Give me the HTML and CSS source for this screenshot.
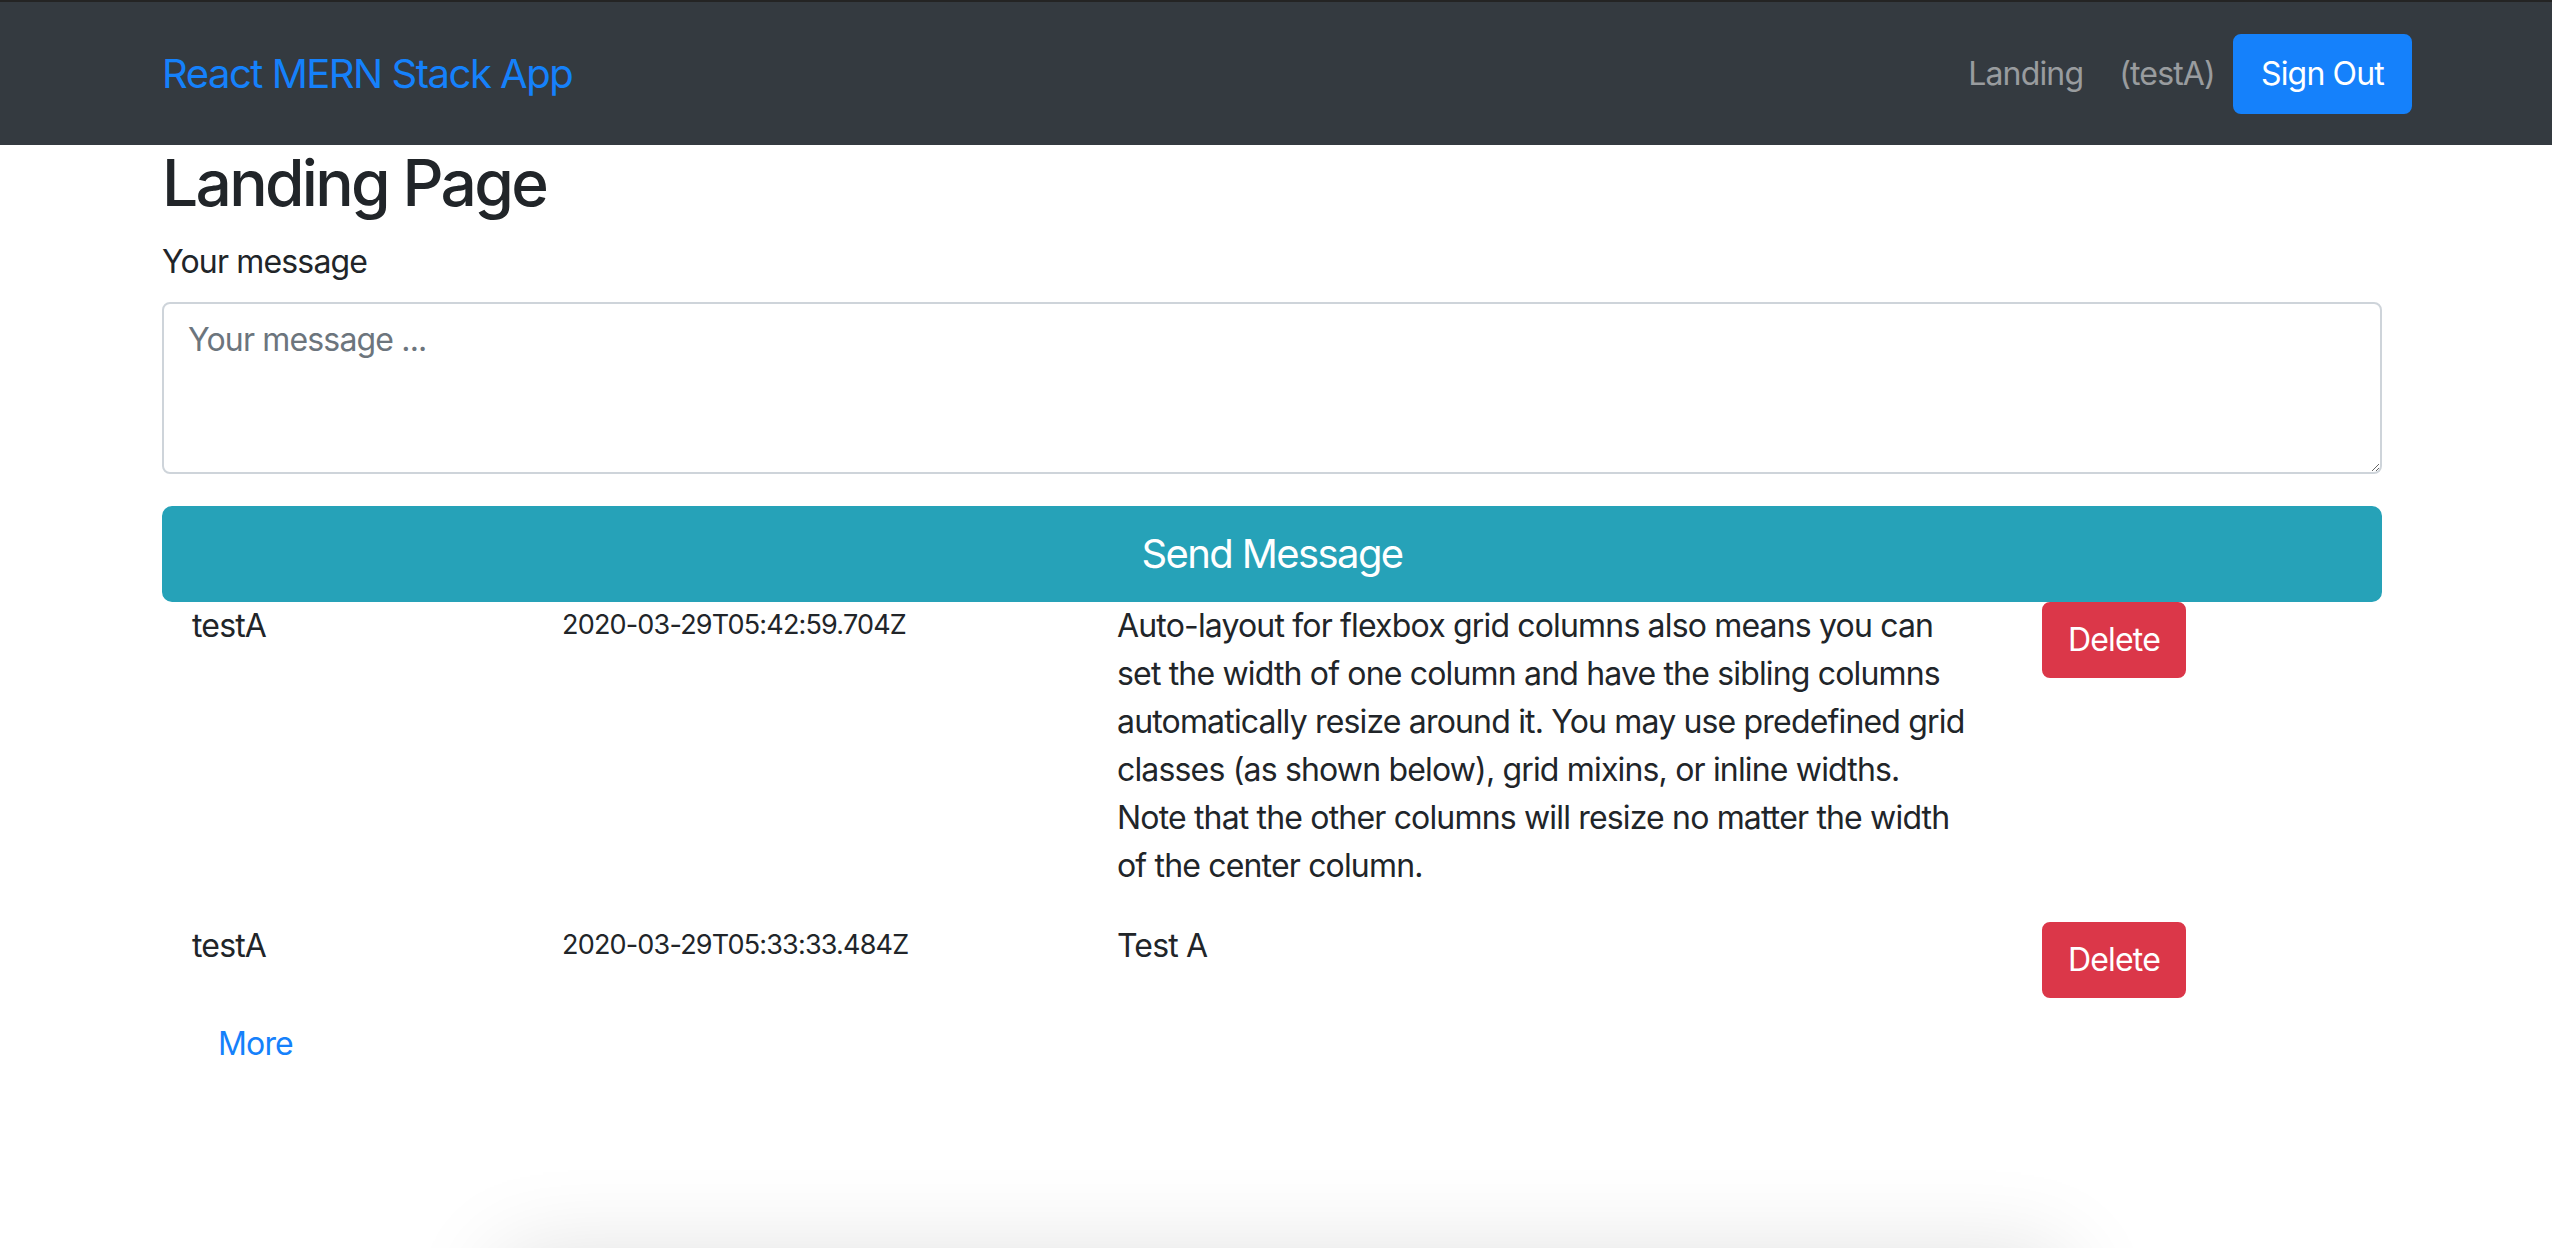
FILE: index.html
```html
<!DOCTYPE html>
<html lang="en">
<head>
<meta charset="utf-8">
<title>React MERN Stack App</title>
<link rel="stylesheet" href="styles.css">
</head>
<body>
<nav class="navbar">
  <a class="brand" href="#">React MERN Stack App</a>
  <div class="nav-right">
    <a class="nav-link" href="#">Landing</a>
    <span class="nav-link">(testA)</span>
    <button class="btn btn-primary">Sign Out</button>
  </div>
</nav>
<main class="container">
  <h2 class="title">Landing Page</h2>
  <form class="form">
    <div class="form-group">
      <label class="label" for="msg">Your message</label>
      <textarea id="msg" class="textarea" rows="3" placeholder="Your message ..."></textarea>
    </div>
    <button type="button" class="btn btn-info btn-lg btn-block">Send Message</button>
  </form>
  <div class="msg-row">
    <div class="col">testA</div>
    <div class="col col-date">2020-03-29T05:42:59.704Z</div>
    <div class="col"><p class="msg-text">Auto-layout for flexbox grid columns also means you can<br>set the width of one column and have the sibling columns<br>automatically resize around it. You may use predefined grid<br>classes (as shown below), grid mixins, or inline widths.<br>Note that the other columns will resize no matter the width<br>of the center column.</p></div>
    <div class="col"><button class="btn btn-danger">Delete</button></div>
  </div>
  <div class="msg-row">
    <div class="col">testA</div>
    <div class="col col-date">2020-03-29T05:33:33.484Z</div>
    <div class="col"><p class="msg-text">Test A</p></div>
    <div class="col"><button class="btn btn-danger">Delete</button></div>
  </div>
  <div class="more-row">
    <button class="btn btn-link">More</button>
  </div>
  <div class="footer-card"></div>
</main>
</body>
</html>
```

FILE: styles.css
```css
html {
  overflow: hidden;
}
body {
  margin: 0;
  font-family: "Inter", "Liberation Sans", sans-serif;
  font-size: 32px;
  line-height: 1.5;
  letter-spacing: -0.026em;
  color: #212529;
  background: #fff;
}
.navbar {
  height: 143px;
  border-top: 2px solid #242424;
  background: #343a40;
  display: flex;
  align-items: center;
  justify-content: space-between;
  padding: 0 140px 0 162px;
}
.brand {
  font-size: 40px;
  letter-spacing: -0.037em;
  color: #1581fb;
  text-decoration: none;
  line-height: 1.5;
}
.nav-right {
  display: flex;
  align-items: center;
}
.nav-link {
  color: rgba(255, 255, 255, 0.5);
  text-decoration: none;
  padding: 0 18px;
}
.btn {
  font-family: inherit;
  font-size: 32px;
  letter-spacing: -0.026em;
  line-height: 1.5;
  padding: 12px 24px;
  border: 2px solid transparent;
  border-radius: 8px;
  color: #fff;
  cursor: pointer;
}
.btn-primary {
  background: #1581fb;
  border-color: #1581fb;
  padding: 14px 26px;
}
.btn-info {
  background: #26a2b8;
  border-color: #26a2b8;
}
.btn-danger {
  background: #db3749;
  border-color: #db3749;
}
.btn-lg {
  font-size: 40px;
  letter-spacing: -0.04em;
  padding: 16px 32px;
  border-radius: 10px;
}
.btn-block {
  display: block;
  width: 100%;
}
.btn-link {
  background: transparent;
  color: #1581fb;
}
.container {
  width: 2220px;
  padding-left: 162px;
}
.title {
  font-size: 64px;
  font-weight: 500;
  letter-spacing: -0.042em;
  line-height: 1.2;
  margin: 0 0 16px;
}
.form-group {
  margin-bottom: 32px;
}
.label {
  display: block;
  margin-bottom: 16px;
}
.textarea {
  display: block;
  box-sizing: border-box;
  width: 100%;
  height: 172px;
  font-family: inherit;
  font-size: 32px;
  letter-spacing: -0.026em;
  line-height: 1.5;
  padding: 12px 24px;
  border: 2px solid #ced4da;
  border-radius: 8px;
  color: #495057;
  margin: 0;
}
.textarea::placeholder {
  color: #6c757d;
}
.form {
  margin: 0;
}
.msg-row {
  display: grid;
  grid-template-columns: 2fr 3fr 5fr 2fr;
}
.col {
  padding: 0 30px;
}
.col-date {
  font-size: 27px;
  letter-spacing: -0.03em;
  line-height: 1.5;
  padding-top: 3px;
}
.msg-text {
  margin: 0 0 32px;
  white-space: nowrap;
}
.more-row {
  padding: 4px 30px 0;
}
.footer-card {
  width: 1560px;
  height: 300px;
  margin-top: 176px;
  margin-left: 340px;
  background: #fff;
  box-shadow: 0 0 90px rgba(0, 0, 0, 0.14);
}
```
